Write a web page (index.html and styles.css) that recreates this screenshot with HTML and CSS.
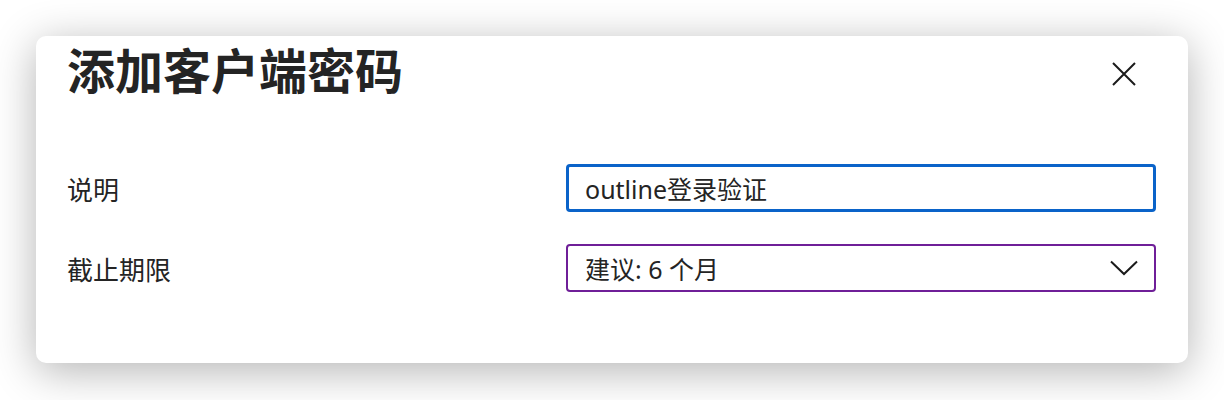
FILE: index.html
```html
<!DOCTYPE html>
<html lang="zh-CN">
<head>
<meta charset="utf-8">
<link rel="stylesheet" href="styles.css">
</head>
<body>
<div class="dialog">
  <div class="header">
    <h1 class="title">添加客户端密码</h1>
    <button class="close" aria-label="关闭">
      <svg width="24" height="24" viewBox="0 0 24 24"><path d="M1 1 L23 23 M23 1 L1 23" stroke="#1b1b1b" stroke-width="2" fill="none"/></svg>
    </button>
  </div>
  <div class="form">
    <label class="label">说明</label>
    <div class="input">outline登录验证</div>
    <label class="label">截止期限</label>
    <div class="select">
      <span>建议: 6 个月</span>
      <svg width="28" height="16" viewBox="0 0 28 16"><path d="M1 1.5 L14 14 L27 1.5" stroke="#1b1b1b" stroke-width="2" fill="none"/></svg>
    </div>
  </div>
</div>
</body>
</html>
```
FILE: styles.css
```css
html, body {
  margin: 0;
  padding: 0;
  background: #ffffff;
}
body {
  width: 1224px;
  height: 400px;
  overflow: hidden;
  font-family: "Noto Sans", "Noto Sans CJK SC", sans-serif;
  color: #242424;
}
.dialog {
  margin: 36px 0 0 36px;
  width: 1152px;
  height: 327px;
  box-sizing: border-box;
  padding: 8px 32px 0 31px;
  background: #fff;
  border-radius: 10px;
  box-shadow: 0 8px 44px rgba(0, 0, 0, 0.3);
}
.header {
  display: flex;
  align-items: flex-start;
  justify-content: space-between;
  height: 55px;
}
.title {
  margin: 0;
  font-family: "Noto Sans CJK SC", sans-serif;
  font-weight: 700;
  font-size: 48px;
  line-height: 48px;
  color: #242424;
}
.close {
  border: 0;
  background: none;
  padding: 0;
  margin-right: 20px;
  margin-top: 18px;
  width: 24px;
  height: 24px;
  display: flex;
}
.form {
  margin-top: 65px;
  display: grid;
  grid-template-columns: 499px 590px;
  row-gap: 32px;
  align-items: center;
}
.label {
  font-family: "Noto Sans CJK SC", sans-serif;
  font-size: 26px;
  color: #242424;
}
.input, .select {
  height: 48px;
  box-sizing: border-box;
  border-radius: 4px;
  display: flex;
  align-items: center;
  font-size: 25px;
  color: #242424;
}
.input {
  border: 3px solid #0a63c9;
  padding-left: 16px;
}
.select {
  border: 2px solid #6f1f98;
  padding-left: 17px;
  padding-right: 16px;
  justify-content: space-between;
}
.select svg {
  display: block;
}
```
